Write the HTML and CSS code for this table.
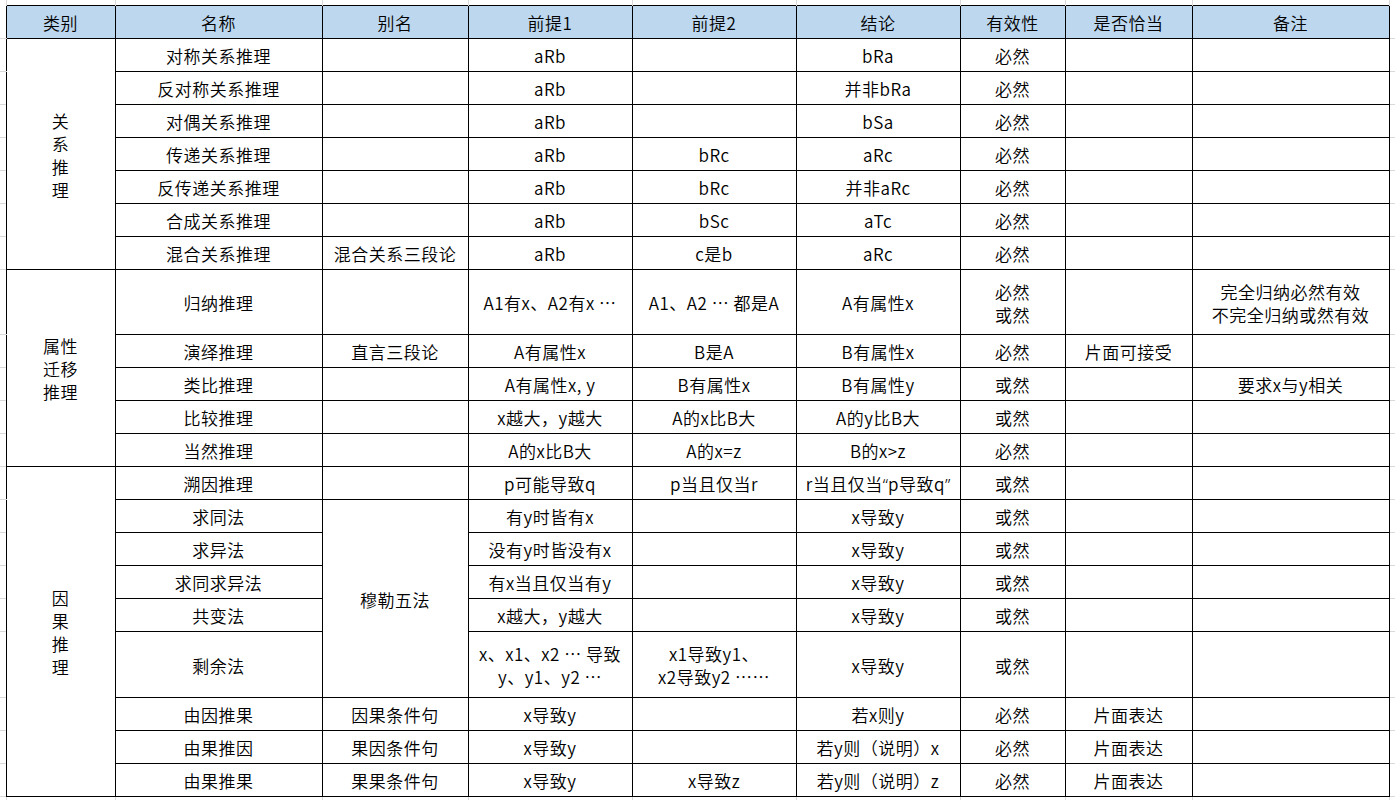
FILE: index.html
```html
<!DOCTYPE html>
<html lang="zh-CN">
<head>
<meta charset="utf-8">
<title>推理分类表</title>
<link rel="stylesheet" href="styles.css">
</head>
<body>
<table class="sheet">
<colgroup>
<col class="c-stub"><col class="c-cat"><col class="c-name"><col class="c-alias"><col class="c-p1"><col class="c-p2"><col class="c-con"><col class="c-val"><col class="c-ok"><col class="c-note"><col class="c-stub">
</colgroup>
<tbody>
<tr class="r-top"><td class="st"></td><td class="st"></td><td class="st"></td><td class="st"></td><td class="st"></td><td class="st"></td><td class="st"></td><td class="st"></td><td class="st"></td><td class="st"></td><td class="st st-last"></td></tr>
<tr class="r-head"><td class="sl"></td><th>类别</th><th>名称</th><th>别名</th><th>前提1</th><th>前提2</th><th>结论</th><th>有效性</th><th>是否恰当</th><th>备注</th><td class="sr"></td></tr>

<tr><td class="sl"></td><td class="cat" rowspan="7">关<br>系<br>推<br>理</td><td>对称关系推理</td><td></td><td>aRb</td><td></td><td>bRa</td><td>必然</td><td></td><td></td><td class="sr"></td></tr>
<tr><td class="sl"></td><td>反对称关系推理</td><td></td><td>aRb</td><td></td><td>并非bRa</td><td>必然</td><td></td><td></td><td class="sr"></td></tr>
<tr><td class="sl"></td><td>对偶关系推理</td><td></td><td>aRb</td><td></td><td>bSa</td><td>必然</td><td></td><td></td><td class="sr"></td></tr>
<tr><td class="sl"></td><td>传递关系推理</td><td></td><td>aRb</td><td>bRc</td><td>aRc</td><td>必然</td><td></td><td></td><td class="sr"></td></tr>
<tr><td class="sl"></td><td>反传递关系推理</td><td></td><td>aRb</td><td>bRc</td><td>并非aRc</td><td>必然</td><td></td><td></td><td class="sr"></td></tr>
<tr><td class="sl"></td><td>合成关系推理</td><td></td><td>aRb</td><td>bSc</td><td>aTc</td><td>必然</td><td></td><td></td><td class="sr"></td></tr>
<tr><td class="sl"></td><td>混合关系推理</td><td>混合关系三段论</td><td>aRb</td><td>c是b</td><td>aRc</td><td>必然</td><td></td><td></td><td class="sr"></td></tr>

<tr class="r-tall"><td class="sl"></td><td class="cat" rowspan="5">属性<br>迁移<br>推理</td><td>归纳推理</td><td></td><td>A1有x、A2有x ⋯</td><td>A1、A2 ⋯ 都是A</td><td>A有属性x</td><td>必然<br>或然</td><td></td><td>完全归纳必然有效<br>不完全归纳或然有效</td><td class="sr"></td></tr>
<tr><td class="sl"></td><td>演绎推理</td><td>直言三段论</td><td>A有属性x</td><td>B是A</td><td>B有属性x</td><td>必然</td><td>片面可接受</td><td></td><td class="sr"></td></tr>
<tr><td class="sl"></td><td>类比推理</td><td></td><td>A有属性x, y</td><td>B有属性x</td><td>B有属性y</td><td>或然</td><td></td><td>要求x与y相关</td><td class="sr"></td></tr>
<tr><td class="sl"></td><td>比较推理</td><td></td><td>x越大，y越大</td><td>A的x比B大</td><td>A的y比B大</td><td>或然</td><td></td><td></td><td class="sr"></td></tr>
<tr><td class="sl"></td><td>当然推理</td><td></td><td>A的x比B大</td><td>A的x=z</td><td>B的x&gt;z</td><td>必然</td><td></td><td></td><td class="sr"></td></tr>

<tr><td class="sl"></td><td class="cat" rowspan="9">因<br>果<br>推<br>理</td><td>溯因推理</td><td></td><td>p可能导致q</td><td>p当且仅当r</td><td>r当且仅当<span class="q">“</span>p导致q<span class="q">”</span></td><td>或然</td><td></td><td></td><td class="sr"></td></tr>
<tr><td class="sl"></td><td>求同法</td><td rowspan="5">穆勒五法</td><td>有y时皆有x</td><td></td><td>x导致y</td><td>或然</td><td></td><td></td><td class="sr"></td></tr>
<tr><td class="sl"></td><td>求异法</td><td>没有y时皆没有x</td><td></td><td>x导致y</td><td>或然</td><td></td><td></td><td class="sr"></td></tr>
<tr><td class="sl"></td><td>求同求异法</td><td>有x当且仅当有y</td><td></td><td>x导致y</td><td>或然</td><td></td><td></td><td class="sr"></td></tr>
<tr><td class="sl"></td><td>共变法</td><td>x越大，y越大</td><td></td><td>x导致y</td><td>或然</td><td></td><td></td><td class="sr"></td></tr>
<tr class="r-tall2"><td class="sl"></td><td>剩余法</td><td>x、x1、x2 ⋯ 导致<br>y、y1、y2 ⋯</td><td>x1导致y1、<br>x2导致y2 ⋯⋯</td><td>x导致y</td><td>或然</td><td></td><td></td><td class="sr"></td></tr>
<tr><td class="sl"></td><td>由因推果</td><td>因果条件句</td><td>x导致y</td><td></td><td>若x则y</td><td>必然</td><td>片面表达</td><td></td><td class="sr"></td></tr>
<tr><td class="sl"></td><td>由果推因</td><td>果因条件句</td><td>x导致y</td><td></td><td>若y则（说明）x</td><td>必然</td><td>片面表达</td><td></td><td class="sr"></td></tr>
<tr><td class="sl"></td><td>由果推果</td><td>果果条件句</td><td>x导致y</td><td>x导致z</td><td>若y则（说明）z</td><td>必然</td><td>片面表达</td><td></td><td class="sr"></td></tr>

<tr class="r-bottom"><td class="st"></td><td class="st"></td><td class="st"></td><td class="st"></td><td class="st"></td><td class="st"></td><td class="st"></td><td class="st"></td><td class="st"></td><td class="st"></td><td class="st st-last"></td></tr>
</tbody>
</table>
</body>
</html>
```

FILE: styles.css
```css
html, body {
  margin: 0;
  padding: 0;
  background: #ffffff;
}

body {
  font-family: "Noto Sans CJK SC", "Noto Sans", sans-serif;
  font-size: 17px;
  font-weight: 350;
  color: #000000;
  width: 1395px;
  height: 800px;
  overflow: hidden;
}

.sheet {
  border-collapse: collapse;
  table-layout: fixed;
  width: 1395px;
}

.c-stub { width: 6px; }
.c-cat { width: 109px; }
.c-name { width: 207px; }
.c-alias { width: 146px; }
.c-p1 { width: 164px; }
.c-p2 { width: 164px; }
.c-con { width: 164px; }
.c-val { width: 105px; }
.c-ok { width: 127px; }
.c-note { width: 197px; }

.sheet td,
.sheet th {
  border: 1px solid #000000;
  padding: 2px 0 0 0;
  text-align: center;
  vertical-align: middle;
  line-height: 23px;
  white-space: nowrap;
  letter-spacing: 0.5px;
  font-weight: 350;
  overflow: visible;
}

.sheet tr { height: 33px; }
.sheet tr.r-top { height: 5px; }
.sheet tr.r-bottom { height: 4px; }
.sheet tr.r-tall { height: 65px; }
.sheet tr.r-tall2 { height: 66px; }

.sheet th {
  background: #bdd7ee;
}

.sheet td.st {
  border: none;
  border-right: 1px solid #d9d9d9;
  padding: 0;
}

.sheet td.st-last {
  border-right: none;
}

.sheet td.sl,
.sheet td.sr {
  border: none;
  border-bottom: 1px solid #d9d9d9;
  padding: 0;
}

.q {
  font-family: "Noto Sans", sans-serif;
  letter-spacing: 0;
}
```
